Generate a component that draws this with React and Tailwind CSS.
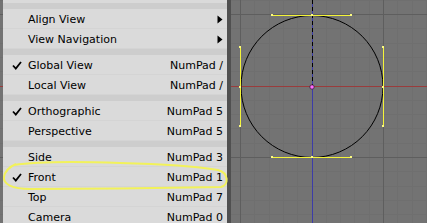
import React from "react";

function Check() {
  return (
    <svg width="10" height="9" viewBox="0 0 10 9" className="block">
      <path d="M1 4.5 L3.8 7.5 L9 1" fill="none" stroke="#000" strokeWidth="1.8" />
    </svg>
  );
}

function Arrow() {
  return (
    <svg width="6" height="9" viewBox="0 0 6 9" className="block">
      <path d="M0.5 0.5 L5.5 4.5 L0.5 8.5 Z" fill="#000" />
    </svg>
  );
}

function Item({ label, shortcut, checked, sub }) {
  return (
    <div className="flex h-[20px] items-center border-b border-[#d4d4d4] pr-[4px] pt-[1px]">
      <div className="flex w-[25px] justify-center pl-[2px]">{checked ? <Check /> : null}</div>
      <div className="flex-1">{label}</div>
      {sub ? <Arrow /> : <div>{shortcut}</div>}
    </div>
  );
}

function Sep() {
  return <div className="h-[6px] bg-[#cdcdcd]" />;
}

function Viewport() {
  const minor = [];
  for (let i = -20; i < 40; i++) {
    const x = Math.round(240 + i * 14.3) + 0.5;
    if (x > 0 && x < 427) minor.push(<line key={"vx" + i} x1={x} y1="0" x2={x} y2="223" stroke="#6f6f6f" strokeWidth="1" />);
    const y = Math.round(14 + i * 14.3) + 0.5;
    if (y > 0 && y < 223) minor.push(<line key={"hy" + i} x1="0" y1={y} x2="427" y2={y} stroke="#6f6f6f" strokeWidth="1" />);
  }
  return (
    <svg width="427" height="223" viewBox="0 0 427 223" className="absolute left-0 top-0" shapeRendering="crispEdges">
      <rect width="427" height="223" fill="#737373" />
      {minor}
      {[97.5, 240.5, 383.5].map((x) => (
        <line key={x} x1={x} y1="0" x2={x} y2="223" stroke="#5e5e5e" />
      ))}
      {[14.5, 157.5].map((y) => (
        <line key={y} x1="0" y1={y} x2="427" y2={y} stroke="#5e5e5e" />
      ))}
      <line x1="0" y1="86.5" x2="427" y2="86.5" stroke="#9a3c3c" />
      <line x1="312.5" y1="0" x2="312.5" y2="223" stroke="#3c3ca8" />
      <line x1="312.5" y1="0" x2="312.5" y2="86" stroke="#000" strokeDasharray="4 3" />
      <circle cx="312" cy="86.5" r="71" fill="none" stroke="#000" strokeWidth="1" shapeRendering="auto" />
      <g stroke="#f4f438" strokeWidth="1">
        <line x1="272" y1="15.5" x2="351" y2="15.5" />
        <line x1="272" y1="157.5" x2="351" y2="157.5" />
        <line x1="240.5" y1="47" x2="240.5" y2="126" />
        <line x1="383.5" y1="47" x2="383.5" y2="126" />
      </g>
      <g fill="#fcfc80">
        <rect x="271" y="14" width="2" height="2" />
        <rect x="350" y="14" width="2" height="2" />
        <rect x="311" y="14" width="2" height="2" />
        <rect x="271" y="156" width="2" height="2" />
        <rect x="350" y="156" width="2" height="2" />
        <rect x="311" y="156" width="2" height="2" />
        <rect x="239" y="46" width="2" height="2" />
        <rect x="239" y="125" width="2" height="2" />
        <rect x="239" y="86" width="2" height="2" />
        <rect x="382" y="46" width="2" height="2" />
        <rect x="382" y="125" width="2" height="2" />
        <rect x="382" y="86" width="2" height="2" />
      </g>
      <circle cx="312" cy="87" r="2.2" fill="#ff6cff" stroke="#3a1a3a" strokeWidth="0.8" shapeRendering="auto" />
    </svg>
  );
}

export default function App() {
  return (
    <div className="relative h-[223px] w-[427px] overflow-hidden bg-[#737373]">
      <Viewport />
      <div className="absolute left-[3px] top-0 w-[224px] bg-[#dadada] text-[11px] leading-none text-black shadow-[4px_0_0_#505050] [font-family:'DejaVu_Sans',sans-serif]">
        <div className="h-[3px]" />
        <Sep />
        <Item label="Align View" sub />
        <Item label="View Navigation" sub />
        <Sep />
        <Item label="Global View" shortcut="NumPad /" checked />
        <Item label="Local View" shortcut="NumPad /" />
        <Sep />
        <Item label="Orthographic" shortcut="NumPad 5" checked />
        <Item label="Perspective" shortcut="NumPad 5" />
        <Sep />
        <Item label="Side" shortcut="NumPad 3" />
        <Item label="Front" shortcut="NumPad 1" checked />
        <Item label="Top" shortcut="NumPad 7" />
        <Item label="Camera" shortcut="NumPad 0" />
      </div>
      <svg width="427" height="223" viewBox="0 0 427 223" className="pointer-events-none absolute left-0 top-0">
        <path
          d="M14 165 C40 161 90 162 120 163 C160 164 200 167 218 170 C229 173 229 185 221 187 C180 188 80 189 30 189 C12 189 3 184 4 177 C5 171 9 167 16 164"
          fill="none"
          stroke="#f2f25a"
          strokeWidth="2"
        />
      </svg>
    </div>
  );
}
